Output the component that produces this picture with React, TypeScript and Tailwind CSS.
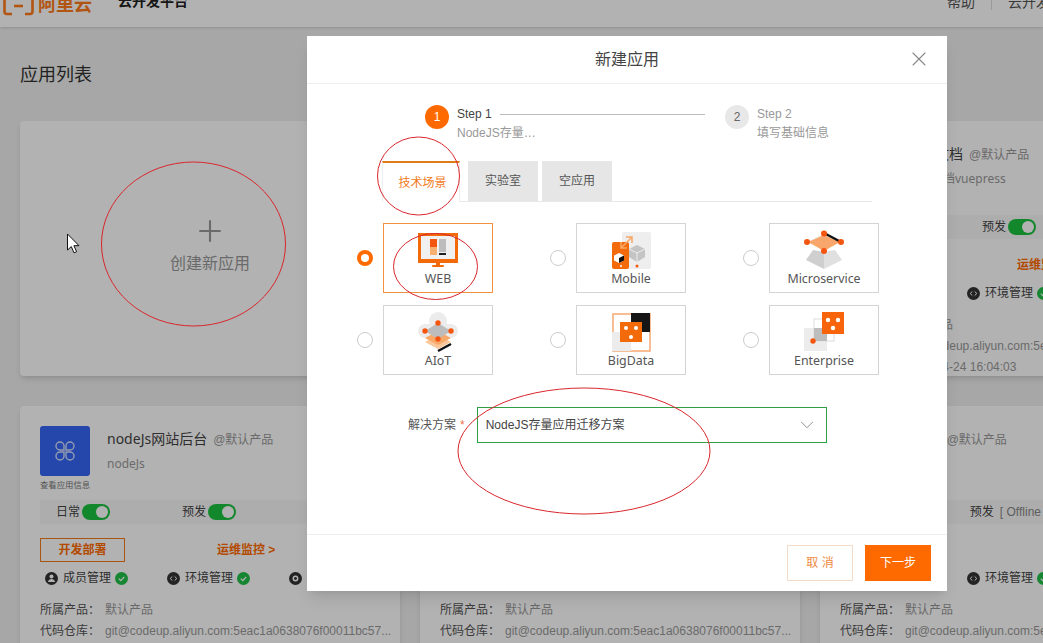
import { ReactNode } from 'react';
import { ChevronDown, Plus, X } from 'lucide-react';

interface AppInfo {
  title: string;
  desc: string;
  daily: boolean;
  pre: boolean;
  time?: string;
}

const apps: AppInfo[] = [
  { title: '项目管理后台', desc: 'koa', daily: true, pre: true },
  { title: '技术文档', desc: '技术文档vuepress', daily: true, pre: true, time: '2020-04-24 16:04:03' },
  { title: 'nodeJs网站后台', desc: 'nodeJs', daily: true, pre: true },
  { title: 'nodeJs官网', desc: 'nodeJs', daily: true, pre: true },
  { title: 'node', desc: 'nodeJs', daily: false, pre: false },
];

const Toggle = () => (
  <span className="flex h-4 w-7 items-center justify-end rounded-full bg-[#1cc23e] pr-[2px]">
    <span className="h-3 w-3 rounded-full bg-white" />
  </span>
);

const Check = () => (
  <svg width="13" height="13" viewBox="0 0 13 13" className="shrink-0">
    <circle cx="6.5" cy="6.5" r="6.5" fill="#22c04a" />
    <path d="M3.8 6.6l2 2 3.4-3.6" fill="none" stroke="#fff" strokeWidth="1.2" />
  </svg>
);

const Status = ({ label, on }: { label: string; on: boolean }) => (
  <div className="flex items-center gap-[2px]">
    <span className="text-xs leading-6 text-[#444]">{label}</span>
    {on ? <Toggle /> : <span className="ml-1 text-xs text-[#888]">[ Offline ]</span>}
  </div>
);

const Manage = ({ icon, label }: { icon: ReactNode; label: string }) => (
  <div className="flex w-[122px] shrink-0 items-center">
    <svg width="13" height="13" viewBox="0 0 13 13" className="shrink-0">
      <circle cx="6.5" cy="6.5" r="6.5" fill="#333" />
      {icon}
    </svg>
    <span className="ml-[5px] mr-[4px] text-xs text-[#444]">{label}</span>
    <Check />
  </div>
);

const Info = ({ label, value }: { label: string; value: string }) => (
  <div className="flex whitespace-nowrap">
    <span className="w-[65px] shrink-0 text-[#555]">{label}：</span>
    <span className="text-[#999]">{value}</span>
  </div>
);

const AppCard = ({ app }: { app: AppInfo }) => (
  <div className="h-[255px] rounded-sm bg-white p-5 shadow-md">
    <div className="flex h-[74px]">
      <div className="w-[50px] shrink-0">
        <div className="flex h-[50px] w-[50px] items-center justify-center rounded-[3px] bg-[#3566f5]">
          <svg width="22" height="22" viewBox="0 0 22 22" fill="none" stroke="#d5e0ff" strokeWidth="1.4">
            <path d="M10 10H6a4 4 0 1 1 4-4z" />
            <path d="M12 10h4a4 4 0 1 0-4-4z" />
            <path d="M10 12H6a4 4 0 1 0 4 4z" />
            <path d="M12 12h4a4 4 0 1 1-4 4z" />
          </svg>
        </div>
        <div className="mt-[3px] whitespace-nowrap text-[8.4px] leading-[12px] text-[#777]">查看应用信息</div>
      </div>
      <div className="ml-[17px] min-w-0 pt-[3px]">
        <div className="flex items-baseline gap-[6px] whitespace-nowrap">
          <span className="font-['Noto_Sans','Noto_Sans_CJK_SC',sans-serif] text-sm leading-5 text-[#444]">{app.title}</span>
          <span className="text-xs text-[#999]">@默认产品</span>
        </div>
        <div className="mt-[6px] font-['Noto_Sans','Noto_Sans_CJK_SC',sans-serif] text-xs leading-[18px] text-[#999]">{app.desc}</div>
      </div>
    </div>
    <div className={`flex h-6 items-center bg-[#f8f8f8] pl-4 ${app.daily ? 'gap-[72px]' : 'gap-[36px]'}`}>
      <Status label="日常" on={app.daily} />
      <Status label="预发" on={app.pre} />
    </div>
    <div className="mt-[14px] flex h-6 items-center">
      {app.daily && (
        <>
          <button className="h-6 w-[85px] border border-[#f07a1c] text-xs font-bold text-[#ff6a00]">开发部署</button>
          <span className="ml-[92px] text-xs font-bold text-[#ff6a00]">运维监控 &gt;</span>
        </>
      )}
    </div>
    <div className="mt-2 flex h-4 items-center pl-[5px]">
      <Manage label="成员管理" icon={<><circle cx="6.5" cy="4.6" r="2" fill="#fff" /><path d="M3 10c.4-4 6.600-4 7 0z" fill="#fff" /></>} />
      <Manage label="环境管理" icon={<path d="M5.300 4.500L3.200 6.500l2.100 2M7.700 4.500l2.100 2-2.100 2" fill="none" stroke="#fff" strokeWidth="1" />} />
      <Manage label="基础设置" icon={<circle cx="6.500" cy="6.500" r="2.200" fill="none" stroke="#fff" strokeWidth="1.500" />} />
    </div>
    <div className="mt-[14px] text-xs leading-[21px]">
      <Info label="所属产品" value="默认产品" />
      <Info label="代码仓库" value="git@codeup.aliyun.com:5eac1a0638076f00011bc57..." />
      {app.time && <Info label="创建时间" value={app.time} />}
    </div>
  </div>
);

const WebIcon = () => (
  <svg width="60" height="40" viewBox="0 0 60 40" className="overflow-visible">
    <rect x="10" y="1" width="40" height="30" fill="#f26a0a" />
    <rect x="13" y="4" width="34" height="23" fill="#f0f0f0" />
    <rect x="22" y="7" width="7" height="8" fill="#f4550f" />
    <rect x="22" y="15" width="7" height="8" fill="#f8b070" />
    <rect x="31" y="7" width="7" height="13" fill="#bdbdbd" />
    <rect x="31" y="21" width="7" height="2" fill="#222" />
    <rect x="28" y="31" width="4" height="2" fill="#f26a0a" />
    <rect x="24" y="33" width="12" height="2" rx="1" fill="#f26a0a" />
  </svg>
);

const MobileIcon = () => (
  <svg width="60" height="40" viewBox="0 0 60 40" className="overflow-visible">
    <rect x="21" y="0" width="29" height="37" rx="2" fill="#eeeeee" />
    <rect x="11" y="10" width="17" height="27" rx="2" fill="#f26a0a" />
    <path d="M36 13l8 4v8l-8 5-8-5v-8z" fill="#c4c4c4" />
    <path d="M36 21l8-4M36 21v9M36 21l-8-4" stroke="#eee" strokeWidth="1" fill="none" />
    <path d="M18 21l5 2.500v5l-5 2.500-5-2.500v-5z" fill="#fff" />
    <path d="M18 26l5-2.500v5l-5 2.500z" fill="#111" />
    <circle cx="36" cy="34" r="1.500" fill="#f4550f" />
    <circle cx="20" cy="34" r="1" fill="#fff" />
    <path d="M20 16l11-11M25 5h6v6M20 10v6h6" stroke="#f8a868" strokeWidth="1.500" fill="none" />
  </svg>
);

const MicroIcon = () => (
  <svg width="60" height="40" viewBox="0 0 60 40" className="overflow-visible">
    <path d="M19 18L12 28l18 9V20z" fill="#cfcfcf" />
    <path d="M41 18l7 10-18 9V20z" fill="#e0e0e0" />
    <path d="M13 10L30 1l-4 14z" fill="#efefef" />
    <path d="M30 3l16 7-16 9-16-9z" fill="#f9a66c" />
    <path d="M30 1l17 9" stroke="#111" strokeWidth="2.500" />
    <circle cx="30" cy="1.500" r="3" fill="#f4550f" />
    <circle cx="13" cy="10" r="3" fill="#f4550f" />
    <circle cx="47" cy="10" r="3" fill="#f4550f" />
    <circle cx="30" cy="19" r="3" fill="#f4550f" />
  </svg>
);

const IotIcon = () => (
  <svg width="60" height="40" viewBox="0 0 60 40" className="overflow-visible">
    <circle cx="30" cy="7" r="9" fill="#ececec" />
    <circle cx="17" cy="17" r="7" fill="#ececec" />
    <circle cx="43" cy="17" r="7" fill="#ececec" />
    <rect x="17" y="10" width="26" height="13" fill="#ececec" />
    <path d="M17 28l13-7 13 7-13 7z" fill="#f9c79a" />
    <path d="M17 24l13-7 13 7-13 7z" fill="#f8a868" />
    <path d="M30 37l13-7" stroke="#111" strokeWidth="2.500" />
    <path d="M30 9l13 8-13 8-13-8z" fill="#bdbdbd" />
    <circle cx="30" cy="9" r="2.700" fill="#f4550f" />
    <circle cx="17" cy="17" r="2.700" fill="#f4550f" />
    <circle cx="43" cy="17" r="2.700" fill="#f4550f" />
    <circle cx="30" cy="25" r="2.700" fill="#f4550f" />
  </svg>
);

const BigDataIcon = () => (
  <svg width="60" height="40" viewBox="0 0 60 40" className="overflow-visible">
    <rect x="12" y="0" width="37" height="37" fill="none" stroke="#f5a872" strokeWidth="1.500" />
    <rect x="30" y="-1" width="19" height="19" fill="#161616" />
    <rect x="11" y="18" width="19" height="19" fill="#ececec" />
    <rect x="19" y="8" width="22" height="20" fill="#f26a0a" />
    <circle cx="25" cy="14" r="2" fill="#fff" />
    <circle cx="35" cy="14" r="2" fill="#fff" />
    <circle cx="30" cy="23" r="2" fill="#fff" />
  </svg>
);

const EnterpriseIcon = () => (
  <svg width="60" height="40" viewBox="0 0 60 40" className="overflow-visible">
    <rect x="10" y="14" width="23" height="23" fill="#ececec" />
    <rect x="20" y="5" width="20" height="22" fill="#fff" stroke="#ddd" strokeWidth="1" />
    <rect x="20" y="14" width="13" height="13" fill="#bdbdbd" />
    <rect x="28" y="-2" width="22" height="22" fill="#f8640c" />
    <circle cx="34" cy="6" r="2.200" fill="#fff" />
    <circle cx="44" cy="6" r="2.200" fill="#fff" />
    <circle cx="39" cy="14" r="2.200" fill="#fff" />
    <circle cx="19" cy="27" r="2.700" fill="#f4550f" />
  </svg>
);

const scenes = [
  { name: 'WEB', icon: <WebIcon />, active: true },
  { name: 'Mobile', icon: <MobileIcon /> },
  { name: 'Microservice', icon: <MicroIcon /> },
  { name: 'AIoT', icon: <IotIcon /> },
  { name: 'BigData', icon: <BigDataIcon /> },
  { name: 'Enterprise', icon: <EnterpriseIcon /> },
];

const Scene = ({ name, icon, active }: { name: string; icon: ReactNode; active?: boolean }) => (
  <div className="flex w-[193px] items-center">
    <span className={`h-4 w-4 shrink-0 rounded-full bg-white ${active ? 'border-[4px] border-[#ff6a00]' : 'border border-[#ccc]'}`} />
    <div className={`ml-[10px] flex h-[70px] w-[110px] flex-col items-center border pt-[8px] ${active ? 'border-[#f0923f]' : 'border-[#d4d4d4]'}`}>
      {icon}
      <span className="-mt-[1px] font-['Noto_Sans',sans-serif] text-[12.400px] leading-4 text-[#555]">{name}</span>
    </div>
  </div>
);

const Modal = () => (
  <div className="absolute left-[307px] top-[36px] flex h-[555px] w-[640px] flex-col bg-white shadow-lg">
    <div className="relative flex h-[48px] shrink-0 items-center justify-center border-b border-[#eee] text-base text-[#444]">
      新建应用
      <X className="absolute right-[16px] top-[11px] h-[24px] w-[24px] text-[#888]" strokeWidth={1.100} />
    </div>
    <div className="flex-1 pt-[20px]">
      <div className="flex pl-[118px]">
        <span className="mt-[1px] flex h-6 w-6 items-center justify-center rounded-full bg-[#ff6a00] text-xs text-white">1</span>
        <div className="ml-2 w-[268px]">
          <div className="flex items-center text-xs leading-5 text-[#444]">
            Step 1
            <span className="ml-[8px] h-px w-[205px] bg-[#bbb]" />
          </div>
          <div className="text-xs leading-[18px] text-[#999]">NodeJS存量…</div>
        </div>
        <span className="mt-[1px] flex h-6 w-6 items-center justify-center rounded-full bg-[#e8e8e8] text-xs text-[#666]">2</span>
        <div className="ml-2">
          <div className="text-xs leading-5 text-[#999]">Step 2</div>
          <div className="text-xs leading-[18px] text-[#999]">填写基础信息</div>
        </div>
      </div>
      <div className="ml-[75px] mt-[19px] flex h-[41px] w-[490px] items-end gap-1 border-b border-[#e8e8e8] text-xs">
        <div className="-mb-px flex h-[41px] w-[78px] items-center justify-center border-x border-t-2 border-x-[#eee] border-t-[#e07b1a] bg-white pl-[3px] text-[#f07a1c]">技术场景</div>
        <div className="ml-1 flex h-[40px] w-[70px] items-center justify-center bg-[#e6e6e6] text-[#555]">实验室</div>
        <div className="flex h-[40px] w-[70px] items-center justify-center bg-[#e6e6e6] text-[#555]">空应用</div>
      </div>
      <div className="ml-[50px] mt-[21px] grid w-[579px] grid-cols-3 gap-y-3">
        {scenes.map((s) => (
          <Scene key={s.name} {...s} />
        ))}
      </div>
      <div className="mt-[32px] flex items-center pl-[101px] text-xs">
        <span className="text-[#555]">解决方案</span>
        <span className="ml-1 text-[#f0714a]">*</span>
        <div className="ml-[12px] flex h-[36px] w-[350px] items-center justify-between border border-[#2f9e44] pl-2 pr-[8px] text-[#444]">
          NodeJS存量应用迁移方案
          <ChevronDown className="h-[22px] w-[22px] text-[#888]" strokeWidth={1} />
        </div>
      </div>
    </div>
    <div className="flex h-[57px] shrink-0 items-center justify-end gap-3 border-t border-[#eee] pr-4 text-xs">
      <button className="h-9 w-[66px] border border-[#f5dcc8] text-[#ee8a42]">取 消</button>
      <button className="h-9 w-[66px] bg-[#ff6a00] text-white">下一步</button>
    </div>
  </div>
);

const Annotations = () => (
  <svg width="1043" height="643" viewBox="0 0 1043 643" className="pointer-events-none absolute left-0 top-0" fill="none" stroke="#d9262c" strokeWidth="1">
    <ellipse cx="193.500" cy="244" rx="92" ry="82" />
    <ellipse cx="418.500" cy="176" rx="41" ry="39" />
    <ellipse cx="435.500" cy="266.500" rx="42" ry="33" />
    <ellipse cx="584" cy="451" rx="126" ry="63" />
    <path d="M67.500 234v16l3.800-3.400 2.700 6.200 2.600-1.100-2.700-6h5.100z" fill="#fff" stroke="#111" strokeWidth="1" />
  </svg>
);

export default function App() {
  return (
    <div className="relative h-[643px] w-[1043px] overflow-hidden bg-[#efefef] font-['Liberation_Sans','Noto_Sans_CJK_SC',sans-serif]">
      <div className="-mt-[23px] flex h-[50px] items-center overflow-hidden bg-white pl-[3px] shadow-sm">
        <svg width="31" height="20" viewBox="0 0 31 20" fill="none" stroke="#ff7a1a" strokeWidth="2.600" className="mt-[7px]">
          <path d="M9 2H4a2.500 2.500 0 0 0-2.500 2.500v11A2.500 2.500 0 0 0 4 18h5" />
          <path d="M22 2h5a2.500 2.500 0 0 1 2.500 2.500v11A2.500 2.500 0 0 1 27 18h-5" />
          <path d="M11 10h9" />
        </svg>
        <span className="ml-[4px] mt-[5px] text-lg font-bold text-[#ff7a1a]">阿里云</span>
        <span className="ml-[26px] -mt-[2px] text-sm font-bold text-[#222]">云开发平台</span>
        <div className="ml-auto -mr-[35px] flex items-center text-sm text-[#555]">
          <span>帮助</span>
          <span className="mx-4 h-4 w-px bg-[#ddd]" />
          <span>云开发平台</span>
        </div>
      </div>
      <h1 className="px-5 pt-[35px] text-lg font-normal leading-[26px] text-[#333]">应用列表</h1>
      <div className="ml-5 mt-[33px] grid w-[1180px] grid-cols-[380px_380px_380px] gap-x-5 gap-y-[30px]">
        <div className="flex h-[255px] flex-col items-center justify-center rounded-sm bg-white pb-[7px] shadow-md">
          <Plus className="h-[34px] w-[34px] text-[#999]" strokeWidth={1.500} />
          <span className="mt-1 text-base leading-6 text-[#999]">创建新应用</span>
        </div>
        {apps.map((a) => (
          <AppCard key={a.title} app={a} />
        ))}
      </div>
      <div className="absolute inset-0 bg-black/30" />
      <Modal />
      <Annotations />
    </div>
  );
}
